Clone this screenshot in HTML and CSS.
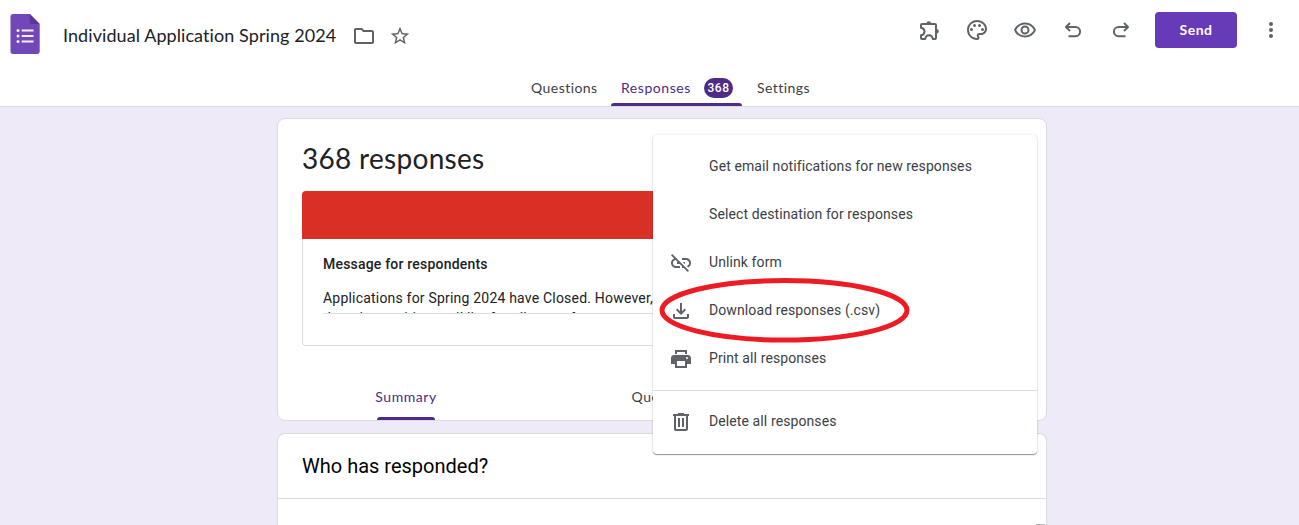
FILE: index.html
```html
<!DOCTYPE html>
<html lang="en">
<head>
<meta charset="utf-8">
<title>Individual Application Spring 2024</title>
<link rel="stylesheet" href="styles.css">
</head>
<body>
<header class="header">
  <div class="topbar">
    <svg class="logo" width="30" height="40" viewBox="0 0 30 40"><path fill="#7248b9" d="M3.200 0H20L29.700 10V37.300a2.700 2.700 0 0 1-2.700 2.700H3.200A2.700 2.700 0 0 1 .5 37.300V2.700A2.700 2.700 0 0 1 3.200 0z"/><path fill="#5a3796" d="M19.700 0L29.700 10H21.700a2 2 0 0 1-2-2z"/><g fill="#f4effb"><circle cx="8" cy="16.500" r="1.500"/><circle cx="8" cy="22" r="1.500"/><circle cx="8" cy="27.500" r="1.500"/><path d="M11.700 15.400h11.800v2.200H11.700zM11.700 20.900h11.800v2.200H11.700zM11.700 26.400h11.800v2.200H11.700z"/></g></svg>
    <h1 class="title">Individual Application Spring 2024</h1>
    <svg class="icon folder" viewBox="0 0 24 24"><path d="M9.170 6l2 2H20v10H4V6h5.170M10 4H4c-1.100 0-1.990.9-1.990 2L2 18c0 1.100.9 2 2 2h16c1.100 0 2-.9 2-2V8c0-1.100-.9-2-2-2h-8l-2-2z"/></svg>
    <svg class="icon star" viewBox="0 0 24 24"><path d="M22 9.240l-7.190-.62L12 2 9.190 8.630 2 9.240l5.460 4.730L5.820 21 12 17.270 18.180 21l-1.630-7.030L22 9.240zM12 15.400l-3.760 2.270 1-4.280-3.320-2.880 4.380-.38L12 6.100l1.710 4.040 4.380.38-3.320 2.880 1 4.280L12 15.400z"/></svg>
    <nav class="actions">
      <svg class="icon line" viewBox="0 0 24 24"><path d="M5 6H18a1 1 0 0 1 1 1V20a1 1 0 0 1-1 1H15.800C15.500 18.500 14 17.200 12 17.200S8.500 18.500 8.200 21H5a1 1 0 0 1-1-1V17.300C6 17 7.500 15.600 7.500 13.500S6 10 4 9.700V7a1 1 0 0 1 1-1z"/><path class="solid" d="M9.500 5.500a2.300 2.300 0 0 1 4.600 0zM19.500 11a2.300 2.300 0 0 1 0 4.600z"/></svg>
      <svg class="icon" viewBox="0 0 24 24"><path d="M12 22C6.490 22 2 17.510 2 12S6.490 2 12 2s10 4.040 10 9c0 3.310-2.690 6-6 6h-1.770c-.28 0-.5.220-.5.500 0 .12.050.23.130.33.410.47.640 1.060.640 1.670A2.500 2.500 0 0 1 12 22zm0-18c-4.410 0-8 3.590-8 8s3.590 8 8 8c.28 0 .5-.22.500-.5a.54.54 0 0 0-.14-.35c-.41-.46-.63-1.050-.63-1.650a2.500 2.500 0 0 1 2.500-2.500H16c2.210 0 4-1.790 4-4 0-3.860-3.590-7-8-7z"/><circle cx="6.500" cy="11.500" r="1.500"/><circle cx="9.500" cy="7.500" r="1.500"/><circle cx="14.500" cy="7.500" r="1.500"/><circle cx="17.500" cy="11.500" r="1.500"/></svg>
      <svg class="icon" viewBox="0 0 24 24"><path d="M12 6.500c3.790 0 7.170 2.130 8.820 5.500-1.650 3.370-5.020 5.500-8.820 5.500S4.830 15.370 3.180 12C4.830 8.630 8.210 6.500 12 6.500m0-2C7 4.500 2.730 7.610 1 12c1.730 4.390 6 7.500 11 7.500s9.270-3.110 11-7.500c-1.730-4.390-6-7.500-11-7.500zm0 5a2.500 2.500 0 0 1 0 5 2.500 2.500 0 0 1 0-5m0-2c-2.480 0-4.500 2.020-4.500 4.500s2.020 4.500 4.500 4.500 4.500-2.020 4.500-4.500-2.020-4.500-4.500-4.500z"/></svg>
      <svg class="icon line" viewBox="0 0 24 24"><path d="M9 5L5 9l4 4M5 9h9.500a4.600 4.600 0 0 1 0 9.200H7.500"/></svg>
      <svg class="icon line" viewBox="0 0 24 24"><path d="M15 5l4 4-4 4M19 9H9.500a4.600 4.600 0 0 0 0 9.200h7"/></svg>
      <button class="send">Send</button>
      <svg class="icon" viewBox="0 0 24 24"><circle cx="12" cy="6" r="2"/><circle cx="12" cy="12" r="2"/><circle cx="12" cy="18" r="2"/></svg>
    </nav>
  </div>
  <nav class="tabs">
    <span class="tab questions">Questions</span>
    <span class="tab active"><span class="responses">Responses</span><span class="count">368</span></span>
    <span class="tab settings">Settings</span>
  </nav>
</header>
<main class="content">
  <section class="card overview">
    <h2 class="heading">368 responses</h2>
    <div class="closed">
      <div class="banner"></div>
      <div class="message">
        <div class="label">Message for respondents</div>
        <div class="text">Applications for Spring 2024 have Closed. However,<br>there is a waiting mail list for all spots for</div>
      </div>
    </div>
    <div class="views"><span class="view selected">Summary</span><span class="view">Question</span></div>
  </section>
  <section class="card responded">
    <h3 class="who">Who has responded?</h3>
    <div class="list"><i class="thumb"></i></div>
  </section>
  <div class="menu">
    <div class="item"><span>Get email notifications for new responses</span></div>
    <div class="item"><span>Select destination for responses</span></div>
    <div class="item"><svg class="icon" viewBox="0 0 24 24"><path d="M17 7h-4v1.900h4c1.710 0 3.100 1.390 3.100 3.100 0 1.430-.98 2.630-2.310 2.980l1.460 1.460C20.880 15.610 22 13.950 22 12c0-2.760-2.240-5-5-5zm-1 4h-2.190l2 2H16v-2zM2 4.270l3.110 3.110A4.991 4.991 0 0 0 2 12c0 2.760 2.240 5 5 5h4v-1.900H7c-1.710 0-3.100-1.390-3.100-3.100 0-1.590 1.210-2.900 2.760-3.070L8.730 11H8v2h2.730L13 15.270V17h1.730l4.010 4L20 19.740 3.270 3 2 4.270z"/></svg><span>Unlink form</span></div>
    <div class="item"><svg class="icon" viewBox="0 0 24 24"><path d="M12 16l-5-5 1.400-1.450 2.600 2.600V4h2v8.150l2.600-2.600L17 11zM6 20c-1.100 0-2-.9-2-2v-3h2v3h12v-3h2v3c0 1.100-.9 2-2 2z"/></svg><span>Download responses (.csv)</span></div>
    <div class="item"><svg class="icon" viewBox="0 0 24 24"><path fill-rule="evenodd" d="M6 3h12v4H6zM19 8H5c-1.660 0-3 1.340-3 3v6h4v4h12v-4h4v-6c0-1.660-1.340-3-3-3zm-3 11H8v-5h8v5zm2-7a1 1 0 1 1 0-2 1 1 0 0 1 0 2z"/><path class="paper" d="M8 5h8v3H8z"/></svg><span>Print all responses</span></div>
    <div class="divider"></div>
    <div class="item"><svg class="icon" viewBox="0 0 24 24"><path d="M15 4V3H9v1H4v2h1v13c0 1.100.9 2 2 2h10c1.100 0 2-.9 2-2V6h1V4h-5zm2 15H7V6h10v13zM9 8h2v9H9zm4 0h2v9h-2z"/></svg><span>Delete all responses</span></div>
    <svg class="highlight" width="252" height="66" viewBox="0 0 252 66"><ellipse cx="125.500" cy="33.300" rx="122.500" ry="29.800"/></svg>
  </div>
</main>
</body>
</html>
```
FILE: styles.css
```css
* { box-sizing: border-box; }
body { margin: 0; height: 525px; overflow: hidden; background: #eeeaf8; color: #202124; font-family: Roboto, sans-serif; font-size: 14px; }
h1, h2, h3 { margin: 0; font-weight: 400; }
.icon { width: 24px; height: 24px; flex: none; fill: #5f6368; }
.line { fill: none; stroke: #5f6368; stroke-width: 2; stroke-linejoin: round; }
.solid { fill: #5f6368; stroke: none; }
.paper { fill: #fff; }

.header { height: 107px; background: #fff; border-bottom: 1px solid #dadce0; font-family: Lato, sans-serif; }
.topbar { display: flex; height: 70px; padding-left: 10px; }
.logo { margin-top: 14px; }
.title { width: 275px; margin: 23px 0 0 23px; font-size: 18px; line-height: 24px; letter-spacing: .08px; white-space: nowrap; }
.folder { margin: 24px 0 0 14px; }
.star { width: 22px; height: 22px; margin: 25px 0 0 13px; }
.actions { display: flex; align-items: center; gap: 24px; height: 36px; margin: 12px 16px 0 auto; }
.send { width: 82px; height: 36px; margin: 0 -2px 0 -2px; padding: 0 0 2px; border: 0; border-radius: 4px; background: #673ab7; color: #fff; font: 700 14px Lato, sans-serif; letter-spacing: .5px; }
.tabs { display: flex; height: 36px; padding-left: 531px; font-size: 14px; line-height: 36px; letter-spacing: .45px; color: #3c4043; }
.questions { width: 80px; }
.tab.active { position: relative; display: flex; align-items: center; width: 131px; padding: 0 0 3px 10px; color: #4d2b87; }
.tab.active::after { content: ""; position: absolute; left: 0; right: 0; bottom: 0; height: 3px; border-radius: 3px 3px 0 0; background: #4d2b87; }
.responses { width: 83px; padding-top: 3px; letter-spacing: .55px; }
.count { width: 29px; height: 20px; border-radius: 10px; background: #4d2b87; color: #fff; font: 500 12px/20px Roboto, sans-serif; text-align: center; margin-top: 3px; }
.settings { padding-left: 15px; }

.content { position: relative; width: 770px; margin: 11px 0 0 277px; }
.card { background: #fff; border: 1px solid #dadce0; border-radius: 8px; }
.overview { height: 303px; padding: 23px 24px 0; }
.heading { height: 49px; font: 400 28px/32px Lato, sans-serif; letter-spacing: .3px; }
.closed { height: 155px; border: 1px solid #dadce0; border-top: 0; border-radius: 4px; }
.banner { height: 48px; margin: 0 -1px; border-radius: 4px 4px 0 0; background: #d93025; }
.message { padding: 15px 20px; line-height: 20px; letter-spacing: .2px; }
.label { font-weight: 500; }
.text { height: 26px; margin-top: 14px; overflow: hidden; border-bottom: 1px solid #dadce0; white-space: nowrap; }
.views { display: grid; grid-template-columns: repeat(3, 256px); height: 46px; margin: 28px -24px 0; font: 400 14px/45px Lato, sans-serif; letter-spacing: .55px; color: #3c4043; }
.view { justify-self: center; }
.selected { position: relative; height: 46px; color: #4d2b87; }
.selected::after { content: ""; position: absolute; left: 2px; right: 2px; bottom: 0; height: 3px; border-radius: 3px 3px 0 0; background: #4d2b87; }
.responded { height: 92px; margin-top: 12px; border-bottom: 0; border-radius: 8px 8px 0 0; }
.who { height: 65px; padding-left: 24px; border-bottom: 1px solid #dadce0; color: #000; font-size: 20px; line-height: 65px; }
.list { display: flex; justify-content: flex-end; padding: 25px 1px 0; }
.thumb { width: 9px; height: 1px; background: #b8b8b8; }

.menu { position: absolute; left: 376px; top: 17px; width: 384px; height: 319px; padding-top: 7px; border-radius: 4px; background: #fff; box-shadow: 0 1px 1px #0006, 0 0 3px #0002; color: #3c4043; letter-spacing: .1px; }
.item { display: flex; align-items: center; height: 48px; padding-left: 16px; }
.item span { margin-left: auto; width: 328px; }
.item .icon { margin-top: 2px; }
.divider { height: 1px; margin: 8px 0 6px; background: #dadce0; }
.highlight { position: absolute; left: 6px; top: 142px; fill: none; stroke: #ed1c24; stroke-width: 5; }
```
